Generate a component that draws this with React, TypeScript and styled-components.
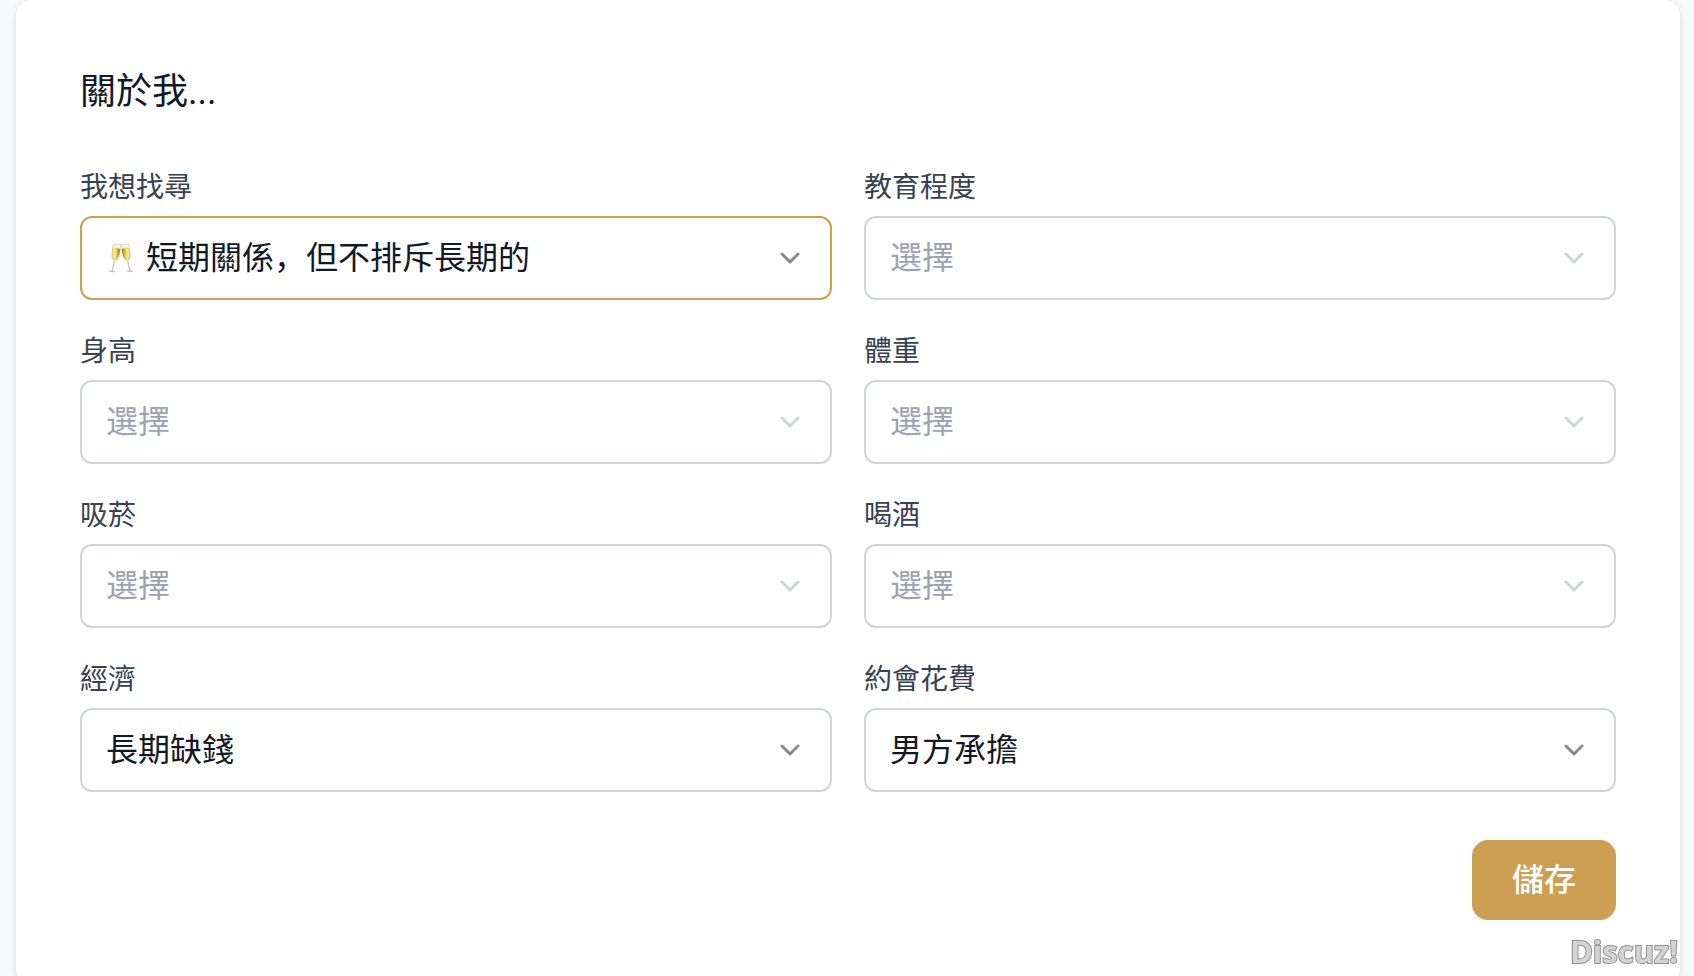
import React, { useId, useState } from 'react';
import styled, { createGlobalStyle } from 'styled-components';

const GlobalStyle = createGlobalStyle`
  *, *::before, *::after { box-sizing: border-box; }
  body {
    margin: 0;
    background: #f9fafb;
    color: #111827;
    font-family: Roboto, "Noto Sans CJK SC", "Noto Sans CJK TC", sans-serif;
    overflow: hidden;
  }
`;

const Page = styled.main`
  padding: 0 14px 0 16px;
`;

const Card = styled.form`
  display: flex;
  flex-direction: column;
  gap: 48px;
  padding: 64px;
  background: #fff;
  border-radius: 16px;
  box-shadow: 0 2px 6px rgba(0, 0, 0, 0.1), 0 2px 16px rgba(0, 0, 0, 0.04);
`;

const Title = styled.h2`
  margin: 0;
  font-size: 36px;
  line-height: 56px;
  font-weight: 400;
`;

const FieldGrid = styled.div`
  display: grid;
  grid-template-columns: repeat(2, minmax(0, 1fr));
  gap: 32px;
`;

const Field = styled.div`
  display: flex;
  flex-direction: column;
  gap: 8px;
`;

const Label = styled.label`
  font-size: 28px;
  line-height: 40px;
  color: #374151;
`;

const Control = styled.div`
  position: relative;
`;

const Select = styled.select<{ $active: boolean; $empty: boolean; $icon: boolean }>`
  display: block;
  width: 100%;
  height: 84px;
  padding: 0 80px 6px ${p => (p.$icon ? 64 : 24)}px;
  appearance: none;
  border: 2px solid ${p => (p.$active ? '#cc9f52' : '#d1d5db')};
  border-radius: 12px;
  outline: none;
  background: #fff;
  color: ${p => (p.$empty ? '#9ca3af' : '#111827')};
  font-family: "Noto Sans CJK SC", "Noto Sans CJK TC", sans-serif;
  font-size: 32px;
  line-height: 48px;
`;

const Arrow = styled.svg<{ $empty: boolean }>`
  position: absolute;
  top: 50%;
  right: 30px;
  width: 24px;
  height: 24px;
  margin-top: -12px;
  fill: none;
  stroke: ${p => (p.$empty ? '#d1d3db' : '#888a90')};
  stroke-width: 3;
  stroke-linecap: round;
  stroke-linejoin: round;
  pointer-events: none;
`;

const OptionIcon = styled.svg`
  position: absolute;
  top: 50%;
  left: 27px;
  width: 28px;
  height: 30px;
  margin-top: -15px;
  pointer-events: none;
`;

const Actions = styled.div`
  display: flex;
  justify-content: flex-end;
`;

const SaveButton = styled.button`
  padding: 16px 40px;
  border: 0;
  border-radius: 16px;
  background: #cc9f52;
  color: #fff;
  font-family: inherit;
  font-size: 32px;
  line-height: 48px;
  font-weight: 500;
  cursor: pointer;
`;

const Watermark = styled.span`
  position: fixed;
  right: 16px;
  bottom: 4px;
  font-family: "Open Sans", "Noto Sans", sans-serif;
  font-size: 31px;
  line-height: 42px;
  font-weight: 700;
  color: #d3d3d3;
  -webkit-text-stroke: 2px #929292;
  paint-order: stroke fill;
  pointer-events: none;
`;

function Glasses() {
  return (
    <OptionIcon viewBox="0 0 28 30" aria-hidden="true">
      <defs>
        <linearGradient id="wine" x1="0" y1="0" x2="1" y2="0">
          <stop offset="0" stopColor="#d8b84a" />
          <stop offset="0.35" stopColor="#f8e78c" />
          <stop offset="0.7" stopColor="#d3a827" />
          <stop offset="1" stopColor="#94701a" />
        </linearGradient>
        <g id="flute">
          <path d="M7.4 17.5 5.2 28" stroke="#b9babd" strokeWidth="1.1" fill="none" />
          <path d="M1.2 28.3q2.2-1.4 4.2-1 2.2.5 3 1.8-3.8.5-7.2-.8z" fill="#c8c8cc" />
          <path d="M6.4.8 13.7 1.6Q13.4 9 11.4 14.4 10 18 7.8 18 4.8 17.4 4.8 12.4 4.9 7 6.4.8z" fill="#f6f3e2" stroke="#cfcab4" strokeWidth=".6" />
          <path d="M5.6 5.2q3.8-.4 7.7.8-.6 5-2.3 9-1.2 2.5-3.1 2.5-2.6-.7-2.8-5.1.1-4 .5-7.2z" fill="url(#wine)" />
          <path d="M7 7q-.9 5 .2 8" stroke="#fff8c9" strokeWidth=".9" fill="none" />
        </g>
      </defs>
      <use href="#flute" />
      <use href="#flute" transform="translate(28 0) scale(-1 1)" />
    </OptionIcon>
  );
}

type FieldData = {
  label: string;
  options: string[];
  initial?: string;
  active?: boolean;
  icon?: boolean;
};

const fields: FieldData[] = [
  { label: '我想找尋', options: ['短期關係，但不排斥長期的'], initial: '短期關係，但不排斥長期的', active: true, icon: true },
  { label: '教育程度', options: [] },
  { label: '身高', options: [] },
  { label: '體重', options: [] },
  { label: '吸菸', options: [] },
  { label: '喝酒', options: [] },
  { label: '經濟', options: ['長期缺錢'], initial: '長期缺錢' },
  { label: '約會花費', options: ['男方承擔'], initial: '男方承擔' },
];

function SelectField({ label, options, initial = '', active = false, icon = false }: FieldData) {
  const id = useId();
  const [value, setValue] = useState(initial);
  const empty = value === '';
  const showIcon = icon && !empty;
  return (
    <Field>
      <Label htmlFor={id}>{label}</Label>
      <Control>
        <Select id={id} value={value} onChange={e => setValue(e.target.value)} $active={active} $empty={empty} $icon={showIcon}>
          <option value="">選擇</option>
          {options.map(o => <option key={o} value={o}>{o}</option>)}
        </Select>
        {showIcon && <Glasses />}
        <Arrow viewBox="0 0 24 24" $empty={empty} aria-hidden="true">
          <path d="M4 8l8 8 8-8" />
        </Arrow>
      </Control>
    </Field>
  );
}

export default function App() {
  return (
    <>
      <GlobalStyle />
      <Page>
        <Card onSubmit={e => e.preventDefault()}>
          <Title>關於我...</Title>
          <FieldGrid>
            {fields.map(f => <SelectField key={f.label} {...f} />)}
          </FieldGrid>
          <Actions>
            <SaveButton type="submit">儲存</SaveButton>
          </Actions>
        </Card>
      </Page>
      <Watermark>Discuz!</Watermark>
    </>
  );
}
